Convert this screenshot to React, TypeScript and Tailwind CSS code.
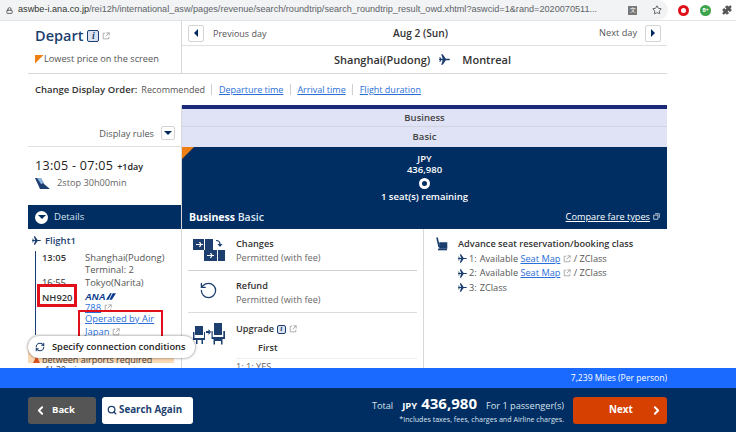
import React from "react";
import { Lock, Star, Puzzle, ChevronLeft, ChevronRight, Search, RefreshCw, RotateCcw } from "lucide-react";

const Ext = ({ c = "" }: { c?: string }) => (
  <svg viewBox="0 0 10 10" className={`inline-block w-[8px] h-[8px] ml-[3px] ${c}`} fill="none" stroke="#9a9a9a" strokeWidth="1">
    <path d="M4 1.5H1.5v7h7V6" />
    <path d="M5.5 1h3.5v3.5M9 1 4.5 5.5" />
  </svg>
);

const PlaneIcon = ({ c = "w-[10px] h-[10px]" }: { c?: string }) => (
  <svg viewBox="0 0 16 16" className={c} fill="#1d3f70">
    <path d="M0 7h5.4L3.2 0.5h2.2L10 7h4c1.2 0 2 .4 2 1s-.8 1-2 1h-4l-4.6 6.5H3.2L5.4 9H0.8L0 8z" />
    <path d="M0.5 4.5h1.3l1.5 3h-1.8zM0.5 11.5h1.3l1.5-3h-1.8z" />
  </svg>
);

const Info = ({ big }: { big?: boolean }) => (
  <span className={`inline-flex items-center justify-center rounded-[2px] border border-[#1d3f70] bg-[#dbe3f0] font-['Liberation_Serif',serif] italic font-bold text-[#1d3f70] ${big ? "w-[12px] h-[12px] text-[10px]" : "w-[9px] h-[9px] text-[8px]"}`}>i</span>
);

const Square = ({ dir }: { dir: "l" | "r" | "d" }) => (
  <span className={`inline-flex items-center justify-center bg-white border border-[#d4d4d4] rounded-[2px] ${dir === "d" ? "w-[14px] h-[14px]" : "w-[16px] h-[17px]"}`}>
    <span className={dir === "l" ? "border-y-[4px] border-y-transparent border-r-[4px] border-r-[#00295f]" : dir === "r" ? "border-y-[4px] border-y-transparent border-l-[4px] border-l-[#00295f]" : "border-x-[4px] border-x-transparent border-t-[4px] border-t-[#00295f]"} />
  </span>
);

const Link = ({ children, c = "" }: { children: React.ReactNode; c?: string }) => (
  <span className={`text-[#2a6fd8] underline ${c}`}>{children}</span>
);

const Divider = () => <span className="w-px h-[11px] bg-[#cfcfcf] mx-[6.5px]" />;

const SeatLine = ({ n, rest }: { n: string; rest: React.ReactNode }) => (
  <div className="flex items-center h-[14.5px] text-[#555]">
    <PlaneIcon c="w-[9px] h-[9px] mr-[2px]" />
    <span>{n}: </span>
    <span className="ml-[3px] flex items-center whitespace-pre">{rest}</span>
  </div>
);

const ChangesIcon = () => (
  <svg viewBox="0 0 32 22" className="w-[32px] h-[22px]">
    <rect x="0" y="0" width="20" height="11" fill="#1d3f70" />
    <rect x="11" y="0" width="1" height="11" fill="#fff" />
    <rect x="11" y="11" width="21" height="11" fill="#1d3f70" />
    <rect x="24" y="11" width="1" height="11" fill="#fff" />
    <path d="M3 5.5h7M6.5 3l1.5 2.5L6.5 8M14 16.5h7M17.5 14l1.5 2.5-1.5 2.5" stroke="#fff" strokeWidth="1.2" fill="none" />
    <path d="M23 1.5c2.5 0 4 1.5 4 4" stroke="#1d3f70" strokeWidth="1.2" fill="none" />
    <path d="M24.5 5h5l-2.5 3z" fill="#1d3f70" />
  </svg>
);

const UpgradeIcon = () => (
  <svg viewBox="0 0 32 22" className="w-[32px] h-[22px]" fill="#1d3f70">
    <path d="M2 3h8v9H2zM0 9h1.5v6H11V9h1v8H10v4H8.5v-4h-4v4H3v-4H0z" />
    <path d="M21 0h8v12h-8zM18.5 8h1.2v6h10.6V8H32v8h-2.5v5.5H28V18h-6v3.5h-1.5V16h-2z" />
    <path d="M13 8h2.5V6l2.5 3-2.5 3v-2H13z" />
  </svg>
);

export default function App() {
  return (
    <div className="w-[736px] h-[432px] overflow-hidden bg-white flex flex-col font-['Open_Sans',sans-serif] text-[9.2px] leading-none text-[#333]">
      {/* browser toolbar */}
      <div className="h-[21px] shrink-0 flex items-center border-b border-[#e4e4e4]">
        <div className="w-[668px] shrink-0 h-full bg-[#f1f3f4] rounded-r-[11px] flex items-center pl-[6px]">
          <Lock size={7} className="text-[#555] mr-[5px]" strokeWidth={3} />
          <span className="font-['Liberation_Sans',sans-serif] text-[9.15px] text-[#5f6368] whitespace-nowrap">
            <span className="text-[#333]">aswbe-i.ana.co.jp</span>/rei12h/international_asw/pages/revenue/search/roundtrip/search_roundtrip_result_owd.xhtml?aswcid=1&rand=2020070511...
          </span>
          <span className="grow" />
          <span className="w-[9px] h-[9px] bg-[#777] mr-[15px] text-white text-[6px] flex items-center justify-center">文</span>
          <Star size={10} className="text-[#444] mr-[6px]" />
        </div>
        <span className="w-[11px] h-[11px] rounded-full border-[3px] border-[#e0101a] ml-[10px] mr-[11px]" />
        <span className="w-[11px] h-[11px] rounded-full bg-[#3da34a] text-white text-[5px] font-bold flex items-center justify-center mr-[11px]">B+</span>
        <Puzzle size={10} className="text-[#555] fill-[#555]" />
      </div>

      {/* page */}
      <div className="relative h-[347px] shrink-0 overflow-hidden pl-[28px] w-[667px]">
        {/* header */}
        <div className="flex h-[53px] border-b border-[#d8d8d8]">
          <div className="w-[154px] shrink-0 pl-[7px] border-r border-[#d8d8d8]">
            <div className="flex items-center h-[30px]">
              <span className="text-[14.5px] font-semibold text-[#1d3f70]">Depart</span>
              <span className="ml-[4px] flex items-center"><Info big /><Ext /></span>
            </div>
            <div className="flex items-center h-[12px] mt-[2px] text-[#555]">
              <span className="w-[9px] h-[9px] bg-[#f07f13] [clip-path:polygon(0_0,100%_0,0_100%)]" />
              <span>Lowest price on the screen</span>
            </div>
          </div>
          <div className="grow flex flex-col">
            <div className="h-[25px] flex items-center justify-between px-[6px] border-b border-[#e0e0e0] relative">
              <span className="flex items-center gap-[9px] text-[#555] text-[9px]"><Square dir="l" />Previous day</span>
              <span className="font-semibold text-[#333] text-[10.2px] absolute left-[211px]">Aug 2 (Sun)</span>
              <span className="flex items-center gap-[8px] text-[#555]">Next day<Square dir="r" /></span>
            </div>
            <div className="grow flex items-center justify-center font-semibold text-[11px] text-[#333] gap-[9px] pr-[4px]">
              <span>Shanghai(Pudong)</span>
              <PlaneIcon c="w-[11px] h-[11px]" />
              <span className="ml-[3px]">Montreal</span>
            </div>
          </div>
        </div>

        {/* sort row */}
        <div className="h-[31px] flex items-center pl-[7px] text-[9px]">
          <span className="font-semibold text-[#333] text-[9.5px] mr-[4px]">Change Display Order:</span>
          <span className="text-[#555]">Recommended</span>
          <Divider />
          <Link>Departure time</Link>
          <Divider />
          <Link>Arrival time</Link>
          <Divider />
          <Link>Flight duration</Link>
        </div>

        {/* fare heads */}
        <div className="flex h-[42px]">
          <div className="w-[154px] shrink-0 border-r border-[#d8d8d8] flex items-end justify-end pb-[6px] pr-[6px] text-[#555] gap-[7px] border-b border-b-[#e0e0e0]">
            <span className="leading-[13px]">Display rules</span><Square dir="d" />
          </div>
          <div className="grow flex flex-col">
            <div className="h-[4px] bg-[#1a2a78]" />
            <div className="h-[18px] bg-[#dfe3f5] border-b border-[#d0d3e0] flex items-center justify-center font-semibold text-[#444] text-[9.5px]">Business</div>
            <div className="h-[20px] bg-[#dfe3f5] flex items-center justify-center font-semibold text-[#444] text-[9.5px]">Basic</div>
          </div>
        </div>

        {/* flight row */}
        <div className="flex h-[82px]">
          <div className="w-[154px] shrink-0 border-r border-[#d8d8d8] flex flex-col">
            <div className="h-[58px] pl-[7px] pt-[13px]">
              <div className="flex items-baseline">
                <span className="text-[12.5px] text-[#222] font-normal tracking-[0.3px]">13:05 - 07:05</span>
                <span className="ml-[4px] text-[9px] font-semibold text-[#222]">+1day</span>
              </div>
              <div className="flex items-center mt-[5px] text-[#666]">
                <svg viewBox="0 0 16 11" className="w-[16px] h-[11px] mr-[6px]">
                  <path d="M0 0h6l3 6 6 5H5z" fill="#1d3f70" />
                  <path d="M2 0h4l3 5-3 1z" fill="#8fb4dc" />
                </svg>
                2stop 30h00min
              </div>
            </div>
            <div className="h-[24px] bg-[#002e62] flex items-center pl-[7px] text-[#d8e2ef] text-[9.5px]">
              <span className="w-[13px] h-[13px] rounded-full bg-white flex items-center justify-center mr-[6px]">
                <span className="border-x-[4px] border-x-transparent border-t-[4px] border-t-[#002e62]" />
              </span>
              Details
            </div>
          </div>
          <div className="grow bg-[#002e62] relative text-white">
            <span className="absolute left-0 top-0 w-[12px] h-[12px] bg-[#f07f13] [clip-path:polygon(0_0,100%_0,0_100%)]" />
            <div className="flex flex-col items-center pt-[6px] leading-[11px] text-[9.5px] font-semibold w-full">
              <span>JPY</span>
              <span>436,980</span>
              <span className="w-[11px] h-[11px] rounded-full border-[3px] border-white mt-[3px] mb-[2px]" />
              <span className="leading-[12px]">1 seat(s) remaining</span>
            </div>
            <div className="absolute inset-x-0 bottom-0 h-[24px] flex items-center justify-between pl-[7px] pr-[7px]">
              <span className="font-bold text-[10.5px]">Business <span className="font-semibold text-[#dfe8f2]">Basic</span></span>
              <span className="flex items-center underline text-[9.2px]">Compare fare types
                <svg viewBox="0 0 10 10" className="w-[7px] h-[7px] ml-[3px]" fill="none" stroke="#fff"><path d="M1 3h6v6H1zM3 1h6v6" /></svg>
              </span>
            </div>
          </div>
        </div>

        {/* body */}
        <div className="flex h-[139px]">
          <div className="w-[154px] shrink-0 border-r border-[#d8d8d8] pl-[4px] pt-[6px] relative">
            <div className="flex items-center font-semibold text-[#1d3f70] text-[9.5px] h-[11px]">
              <PlaneIcon c="w-[9px] h-[9px] mr-[4px]" />Flight1
            </div>
            <div className="ml-[3px] mt-[5px] border-l border-l-[#1d3f70] pl-[6px] w-[139px] h-[84px]">
              <div className="grid grid-cols-[43px_1fr] text-[#333] leading-[11.5px] text-[9.4px]">
                <span className="font-semibold mt-[1px]">13:05</span>
                <span className="text-[#555] mt-[1px]">Shanghai(Pudong)<br />Terminal: 2</span>
                <span className="mt-[2px]">16:55</span>
                <span className="mt-[2px] text-[#555]">Tokyo(Narita)</span>
                <span className="font-semibold mt-[3px]">NH920</span>
                <span className="mt-[3px] flex items-center h-[10px]">
                  <span className="font-['Liberation_Sans',sans-serif] font-bold italic text-[#0b3b8c] text-[9.5px]">ANA</span>
                  <svg viewBox="0 0 12 8" className="w-[10px] h-[7px]"><path d="M4 8 8 0h4L7 8zM0 8l5-8h2L3 8z" fill="#0b3b8c" /></svg>
                </span>
                <span />
                <span className="flex items-center -mt-[1px]"><Link>788</Link><Ext /></span>
                <span />
                <span className="-mt-[2px] leading-[13px]"><Link>Operated by Air</Link><br /><Link>Japan</Link><Ext /></span>
              </div>
            </div>
            {/* orange warning, mostly hidden behind the pill */}
            <div className="w-[146px] -ml-[4px] h-[20px] mt-[8px] bg-[#fbd9b5] text-[#444] pl-[14px] pt-[12px] leading-[10px] relative text-[9px]">
              <span className="absolute left-[5px] top-[13px] w-[7px] h-[7px] bg-[#d9531e] [clip-path:polygon(50%_0,100%_100%,0_100%)]" />
              between airports required<br />
              <span className="pl-[3px]">1h30min</span>
            </div>
          </div>

          <div className="grow flex relative bg-white">
            <div className="w-[242px] shrink-0 border-r border-[#d8d8d8] px-[6px]">
              <div className="h-[42px] flex border-b border-[#cfcfcf]">
                <div className="w-[48px] pl-[5px] pt-[10px]"><ChangesIcon /></div>
                <div className="pt-[9px]">
                  <div className="font-semibold leading-[12px]">Changes</div>
                  <div className="text-[#666] leading-[14px] mt-[1px]">Permitted (with fee)</div>
                </div>
              </div>
              <div className="h-[42px] flex border-b border-[#dcdcdc]">
                <div className="w-[48px] pl-[11px] pt-[10px]"><RotateCcw size={19} strokeWidth={1.6} className="text-[#1d3f70]" /></div>
                <div className="pt-[9px]">
                  <div className="font-semibold leading-[12px]">Refund</div>
                  <div className="text-[#666] leading-[14px] mt-[1px]">Permitted (with fee)</div>
                </div>
              </div>
              <div className="flex">
                <div className="w-[48px] pl-[5px] pt-[10px]"><UpgradeIcon /></div>
                <div className="grow pt-[10px]">
                  <div className="flex items-center font-semibold leading-[12px] h-[12px]">Upgrade<span className="ml-[3px] flex items-center"><Info /><Ext /></span></div>
                  <div className="font-semibold pl-[22px] mt-[7px] h-[17px] leading-[12px] border-b border-[#eeeeee]">First</div>
                  <div className="text-[#666] mt-[3px]">1: 1: YES</div>
                </div>
              </div>
            </div>
            <div className="grow pl-[11px] pt-[8px]">
              <div className="flex">
                <svg viewBox="0 0 14 14" className="w-[14px] h-[14px] mr-[9px]" fill="none" stroke="#1d3f70" strokeWidth="1.6">
                  <path d="M2 0.5l2 9h8" />
                  <path d="M5 6h6.5v5H5z" fill="#1d3f70" />
                  <path d="M3 12.5h9" />
                </svg>
                <div className="leading-[14.5px]">
                  <div className="font-semibold text-[#333] text-[9.2px]">Advance seat reservation/booking class</div>
                  <SeatLine n="1" rest={<>Available <Link>Seat Map</Link><Ext /> / ZClass</>} />
                  <SeatLine n="2" rest={<>Available <Link>Seat Map</Link><Ext /> / ZClass</>} />
                  <SeatLine n="3" rest={<>ZClass</>} />
                </div>
              </div>
            </div>
          </div>
        </div>

        {/* overlays */}
        <span className="absolute left-[37px] top-[263px] w-[40px] h-[23px] border-[3px] border-[#e1101a] pointer-events-none" />
        <span className="absolute left-[78px] top-[289px] w-[85px] h-[28px] border-[2px] border-[#e1101a] pointer-events-none" />
        <div className="absolute left-[28px] top-[315px] w-[167px] h-[22px] bg-white rounded-full shadow-[0_0_3px_rgba(0,0,0,0.55)] flex items-center pl-[7px] font-semibold text-[9.3px] text-[#222]">
          <RefreshCw size={10} strokeWidth={2.5} className="text-[#1d3f70] mr-[7px]" />
          Specify connection conditions
        </div>
      </div>

      {/* blue miles bar */}
      <div className="h-[20px] shrink-0 bg-[#1a6aff] flex items-center justify-end pr-[69px] text-white text-[8.6px]">7,239 Miles (Per person)</div>

      {/* footer */}
      <div className="grow bg-[#002e62] flex items-center pl-[28px] pr-[69px]">
        <button className="w-[68px] h-[27px] rounded-[3px] bg-[#555] text-white font-bold flex items-center pl-[6px] text-[9.5px]">
          <ChevronLeft size={13} strokeWidth={3.5} className="mr-[5px]" />Back
        </button>
        <button className="ml-[6px] w-[91px] h-[27px] rounded-[3px] bg-white text-[#1d3f70] font-bold flex items-center pl-[5px] text-[9.8px]">
          <Search size={10} strokeWidth={3} className="mr-[2px]" />Search Again
        </button>
        <div className="grow flex flex-col items-end pr-[9px] text-white">
          <div className="flex items-baseline">
            <span className="text-[9.2px] text-[#dbe4ef] mr-[9px]">Total</span>
            <span className="font-bold text-[9.5px] mr-[4px]">JPY</span>
            <span className="font-bold text-[15px] mr-[9px]">436,980</span>
            <span className="text-[9.2px] text-[#dbe4ef]">For 1 passenger(s)</span>
          </div>
          <div className="text-[7.1px] mt-[5px] text-[#dbe4ef]">*Includes taxes, fees, charges and Airline charges.</div>
        </div>
        <button className="w-[94px] h-[27px] rounded-[3px] bg-[#d64000] text-white font-bold text-[9.8px] flex items-center justify-between pl-[36px] pr-[4px]">
          Next<ChevronRight size={13} strokeWidth={3.5} />
        </button>
      </div>
    </div>
  );
}
